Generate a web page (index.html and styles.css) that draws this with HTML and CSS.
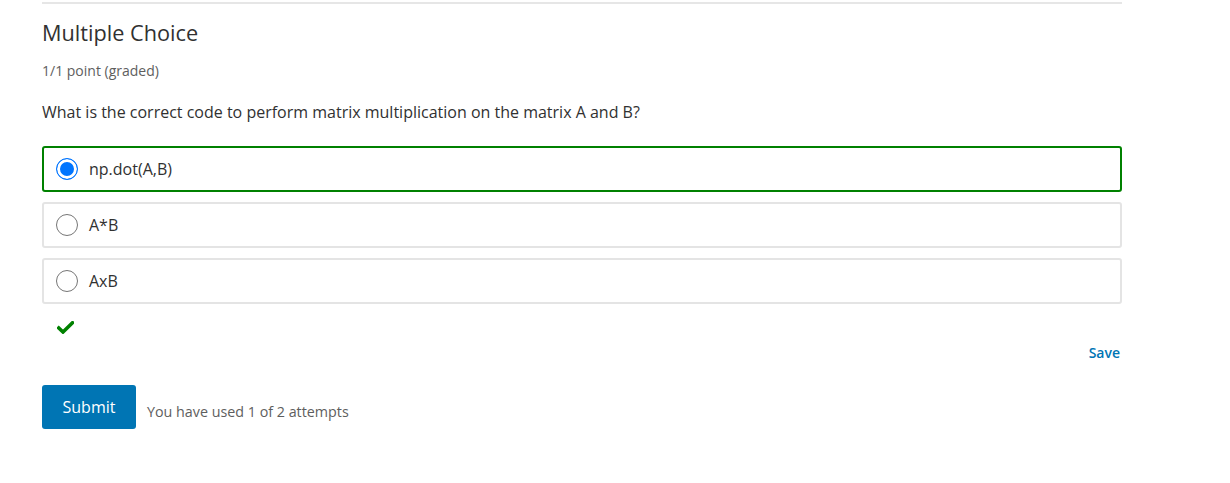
FILE: index.html
```html
<!DOCTYPE html>
<html lang="en">
<head>
<meta charset="utf-8">
<title>Multiple Choice</title>
<link rel="stylesheet" href="styles.css">
</head>
<body>
<div class="problem">
  <h3 class="title">Multiple Choice</h3>
  <div class="points">1/1 point (graded)</div>
  <p class="question">What is the correct code to perform matrix multiplication on the matrix A and B?</p>
  <div class="choices">
    <label class="choice correct"><span class="radio checked"></span><span class="label">np.dot(A,B)</span></label>
    <label class="choice"><span class="radio"></span><span class="label">A*B</span></label>
    <label class="choice"><span class="radio"></span><span class="label">AxB</span></label>
  </div>
  <div class="status">
    <svg width="17" height="13" viewBox="0 0 17 13"><path d="M1.8 7 L6 11 L15.5 1.8" fill="none" stroke="#008100" stroke-width="3.6" stroke-linecap="square"/></svg>
  </div>
  <div class="save-row"><span class="save">Save</span></div>
  <div class="actions">
    <button class="submit">Submit</button>
    <span class="attempts">You have used 1 of 2 attempts</span>
  </div>
</div>
</body>
</html>
```
FILE: styles.css
```css
body {
  margin: 0;
  padding: 2px 0 0 0;
  font-family: "Open Sans", "Liberation Sans", sans-serif;
  color: #313131;
  background: #fff;
}
.problem {
  width: 1080px;
  margin-left: 42px;
  border-top: 2px solid #e6e6e6;
}
.title {
  margin: 14px 0 0 0;
  font-size: 21.7px;
  font-weight: 400;
  line-height: 30px;
  color: #313131;
}
.points {
  margin-top: 14px;
  font-size: 14px;
  line-height: 18px;
  color: #5e5e5e;
}
.question {
  margin: 22px 0 0 0;
  font-size: 16px;
  line-height: 20px;
}
.choices {
  margin-top: 24px;
  display: flex;
  flex-direction: column;
  gap: 10px;
}
.choice {
  display: flex;
  align-items: center;
  height: 46px;
  box-sizing: border-box;
  border: 2px solid #e4e4e4;
  border-radius: 3px;
  padding-left: 12px;
}
.choice.correct {
  border-color: #008100;
}
.radio {
  width: 22px;
  height: 22px;
  box-sizing: border-box;
  border-radius: 50%;
  border: 1px solid #767676;
  margin-right: 11px;
  flex: none;
}
.radio.checked {
  border: 1.5px solid #0075ff;
  background: #0075ff;
  box-shadow: inset 0 0 0 3px #fff;
}
.label {
  font-size: 16px;
  line-height: 20px;
  color: #313131;
}
.status {
  margin-top: 17px;
  padding-left: 15px;
  height: 13px;
}
.status svg {
  display: block;
}
.save-row {
  margin-top: 9px;
  display: flex;
  justify-content: flex-end;
  padding-right: 2px;
}
.save {
  font-size: 14px;
  line-height: 20px;
  font-weight: 600;
  color: #0075b4;
}
.actions {
  margin-top: 22px;
  display: flex;
  align-items: flex-end;
}
.submit {
  width: 94px;
  height: 44px;
  border: none;
  border-radius: 3px;
  background: #0075b4;
  color: #fff;
  font-family: "Open Sans", "Liberation Sans", sans-serif;
  font-size: 16px;
  padding: 0;
}
.attempts {
  margin-left: 11px;
  margin-bottom: 7px;
  font-size: 14.3px;
  line-height: 20px;
  color: #5e5e5e;
}
```
